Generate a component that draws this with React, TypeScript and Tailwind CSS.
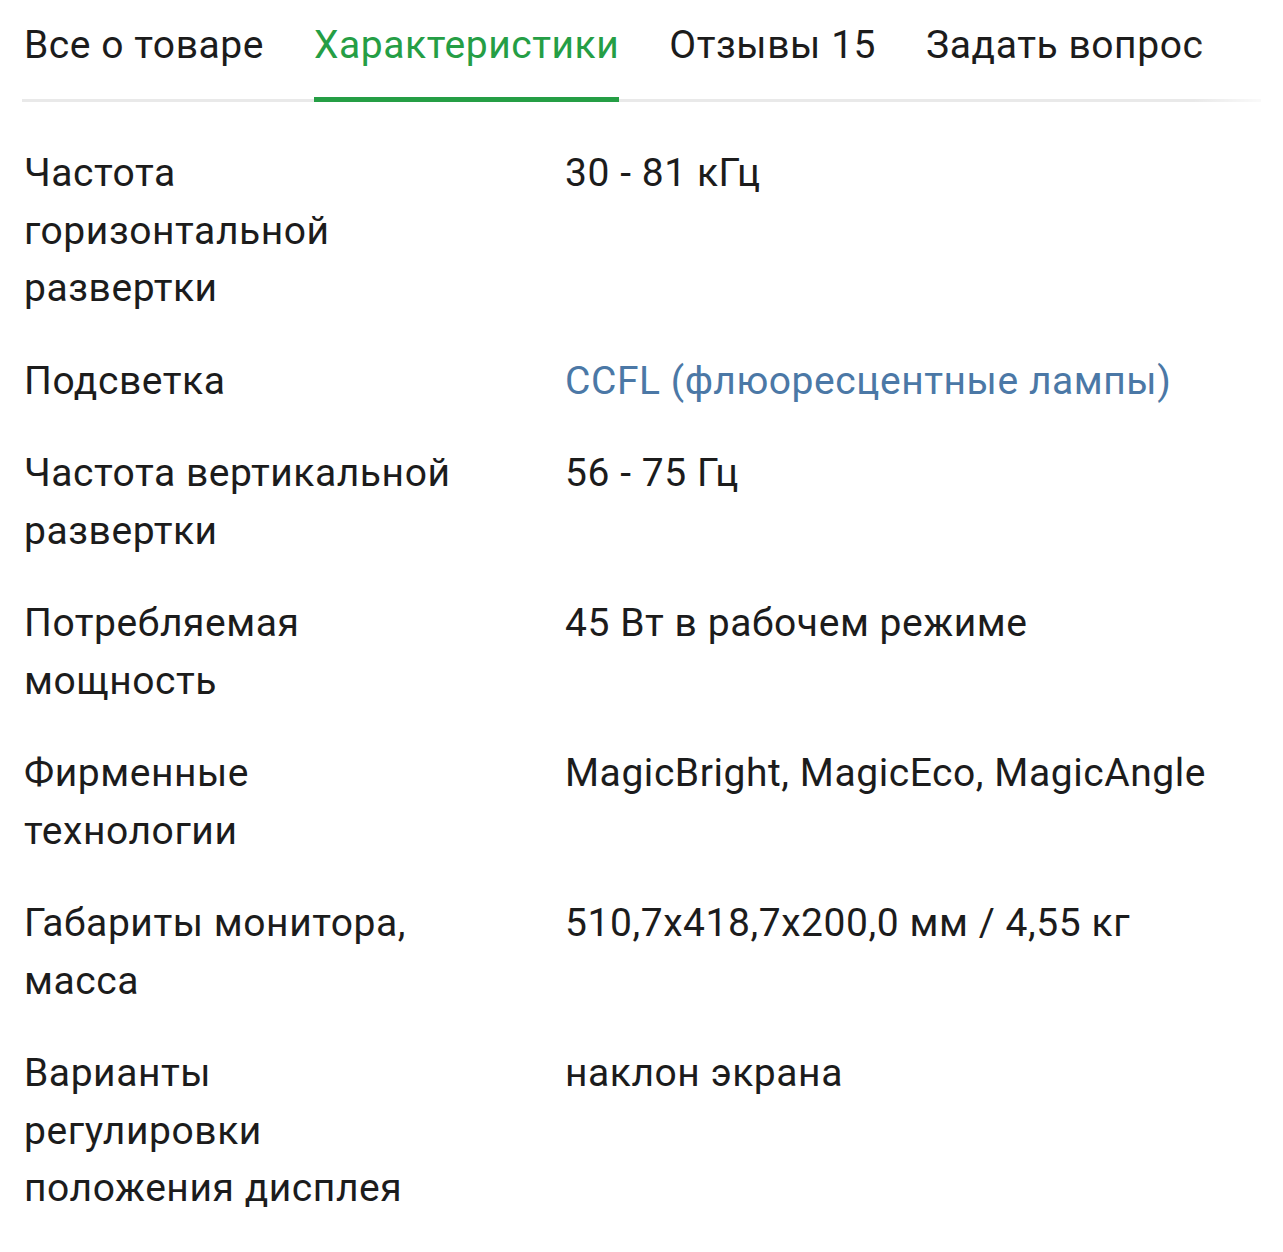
const tabs = [
  { label: 'Все о товаре', active: false },
  { label: 'Характеристики', active: true },
  { label: 'Отзывы 15', active: false },
  { label: 'Задать вопрос', active: false },
];

type Spec = { name: string[]; value: string; link?: boolean };

const specs: Spec[] = [
  { name: ['Частота', 'горизонтальной', 'развертки'], value: '30 - 81 кГц' },
  { name: ['Подсветка'], value: 'CCFL (флюоресцентные лампы)', link: true },
  { name: ['Частота вертикальной', 'развертки'], value: '56 - 75 Гц' },
  { name: ['Потребляемая', 'мощность'], value: '45 Вт в рабочем режиме' },
  { name: ['Фирменные', 'технологии'], value: 'MagicBright, MagicEco, MagicAngle' },
  { name: ['Габариты монитора,', 'масса'], value: '510,7x418,7x200,0 мм / 4,55 кг' },
  { name: ['Варианты', 'регулировки', 'положения дисплея'], value: 'наклон экрана' },
];

export default function App() {
  return (
    <div className="w-[1283px] h-[1252px] overflow-hidden bg-white text-[#1c1c1c] font-['Roboto',sans-serif] tracking-[0.035em]">
      {/* Tabs */}
      <div className="relative mx-[22px] border-b-[3px] border-[#e9e9e9]">
        <div className="flex gap-[50px] pl-[2px] text-[39px] leading-[57px] whitespace-nowrap">
          {tabs.map((t) => (
            <div
              key={t.label}
              className={
                t.active
                  ? 'pt-[17px] pb-[20px] border-b-[5px] border-[#259e45] -mb-[3px] text-[#259e45]'
                  : 'pt-[17px] pb-[25px]'
              }
            >
              {t.label}
            </div>
          ))}
        </div>
        <div className="absolute right-[-22px] top-0 bottom-[-3px] w-[90px] bg-gradient-to-r from-white/0 to-white" />
      </div>

      {/* Specs */}
      <div className="mt-[43px] px-6 flex flex-col gap-[35px] text-[39px] leading-[57.5px]">
        {specs.map((s) => (
          <div key={s.value} className="grid grid-cols-[541px_1fr]">
            <div>
              {s.name.map((line) => (
                <div key={line}>{line}</div>
              ))}
            </div>
            <div className={s.link ? 'text-[#4b78a6] whitespace-nowrap' : 'whitespace-nowrap'}>{s.value}</div>
          </div>
        ))}
      </div>
    </div>
  );
}
